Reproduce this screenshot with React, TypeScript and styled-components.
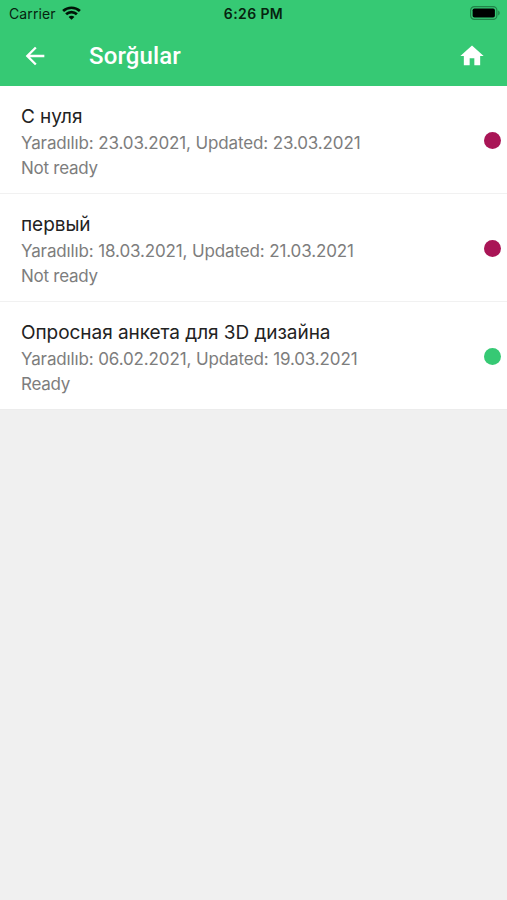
import React from 'react';
import styled, { createGlobalStyle } from 'styled-components';

const GlobalStyle = createGlobalStyle`
  * { box-sizing: border-box; }
  body { margin: 0; background: #f0f0f0; }
`;

const Screen = styled.div`
  min-height: 900px;
  background: #f0f0f0;
  font-family: Inter, 'Noto Sans', sans-serif;
`;

const Header = styled.header`
  height: 86px;
  background: #36c974;
`;

const StatusBar = styled.div`
  display: grid;
  grid-template-columns: 1fr auto 1fr;
  align-items: center;
  height: 27px;
  padding: 0 7px 0 9px;
  color: #06230f;
  font-size: 14px;
  line-height: 27px;
`;

const Carrier = styled.div`
  display: flex;
  align-items: center;
  gap: 6px;
  letter-spacing: 0.1px;

  svg { margin-top: -2px; }
`;

const Clock = styled.time`
  margin-right: 2px;
  font-weight: 600;
  letter-spacing: 0.4px;
`;

const Battery = styled.svg`
  justify-self: end;
  margin-top: -1px;
`;

const NavBar = styled.nav`
  display: flex;
  align-items: center;
  height: 57px;
  padding: 0 21px;
  color: #fff;
`;

const IconButton = styled.button`
  display: flex;
  padding: 0;
  border: 0;
  background: none;
  color: inherit;
`;

const Title = styled.h1`
  flex: 1;
  margin: 0 0 0 40px;
  font: 500 24px/32px Roboto, sans-serif;
  letter-spacing: 0.12px;
`;

const List = styled.ul`
  margin: 0;
  padding: 0;
  list-style: none;
`;

const Row = styled.li`
  display: flex;
  align-items: center;
  justify-content: space-between;
  height: 108px;
  padding: 4px 6px 0 21px;
  background: #fff;
  box-shadow: inset 0 -1px #f1f1f1, 0 1px #f8f8f8;

  &:last-child { box-shadow: inset 0 -1px #ececec; }
`;

const Name = styled.div`
  padding-bottom: 1px;
  color: #222;
  font-size: 19px;
  line-height: 27px;
  letter-spacing: -0.05px;
`;

const Detail = styled.div`
  color: #7d7d7d;
  font-size: 17px;
  line-height: 25px;
  letter-spacing: -0.25px;
`;

const Dates = styled(Detail)`
  letter-spacing: -0.13px;
`;

const Dot = styled.span<{ $ready: boolean }>`
  width: 17px;
  height: 17px;
  margin-bottom: 3px;
  border-radius: 50%;
  background: ${({ $ready }) => ($ready ? '#36c974' : '#a91556')};
`;

const requests = [
  { name: 'С нуля', created: '23.03.2021', updated: '23.03.2021', ready: false },
  { name: 'первый', created: '18.03.2021', updated: '21.03.2021', ready: false },
  { name: 'Опросная анкета для 3D дизайна', created: '06.02.2021', updated: '19.03.2021', ready: true },
];

export default function App() {
  return (
    <Screen>
      <GlobalStyle />
      <Header>
        <StatusBar>
          <Carrier>
            <span>Carrier</span>
            <svg width="19" height="14" viewBox="0 0 19 14" fill="none" stroke="#001407" strokeWidth="2.7">
              <path d="M1.1 5.1C5.8.6 13.2.6 17.9 5.1" />
              <path d="M4.1 8.2c3-2.9 7.8-2.9 10.8 0" />
              <path d="M9.5 13.8 6.6 10.9c1.6-1.5 4.2-1.5 5.8 0z" fill="#001407" stroke="none" />
            </svg>
          </Carrier>
          <Clock>6:26 PM</Clock>
          <Battery width="30" height="14" viewBox="0 0 30 14">
            <rect x=".6" y=".6" width="26.3" height="12.8" rx="3.8" fill="none" stroke="#218449" strokeWidth="1.2" />
            <rect x="2.6" y="2.4" width="22.3" height="9.2" rx="1.8" fill="#000" />
            <path d="M28.2 4.6c2 .7 2 4.1 0 4.8z" fill="#218449" />
          </Battery>
        </StatusBar>
        <NavBar>
          <IconButton aria-label="Back">
            <svg width="28" height="28" viewBox="0 0 24 24" fill="currentColor">
              <path d="M20 11H7.83l5.59-5.59L12 4l-8 8 8 8 1.41-1.41L7.83 13H20z" />
            </svg>
          </IconButton>
          <Title>Sorğular</Title>
          <IconButton aria-label="Home">
            <svg width="28" height="28" viewBox="0 0 24 24" fill="currentColor">
              <path d="M10 20v-6h4v6h5v-8h3L12 3 2 12h3v8z" />
            </svg>
          </IconButton>
        </NavBar>
      </Header>
      <List>
        {requests.map((r) => (
          <Row key={r.name}>
            <div>
              <Name>{r.name}</Name>
              <Dates>Yaradılıb: {r.created}, Updated: {r.updated}</Dates>
              <Detail>{r.ready ? 'Ready' : 'Not ready'}</Detail>
            </div>
            <Dot $ready={r.ready} />
          </Row>
        ))}
      </List>
    </Screen>
  );
}
